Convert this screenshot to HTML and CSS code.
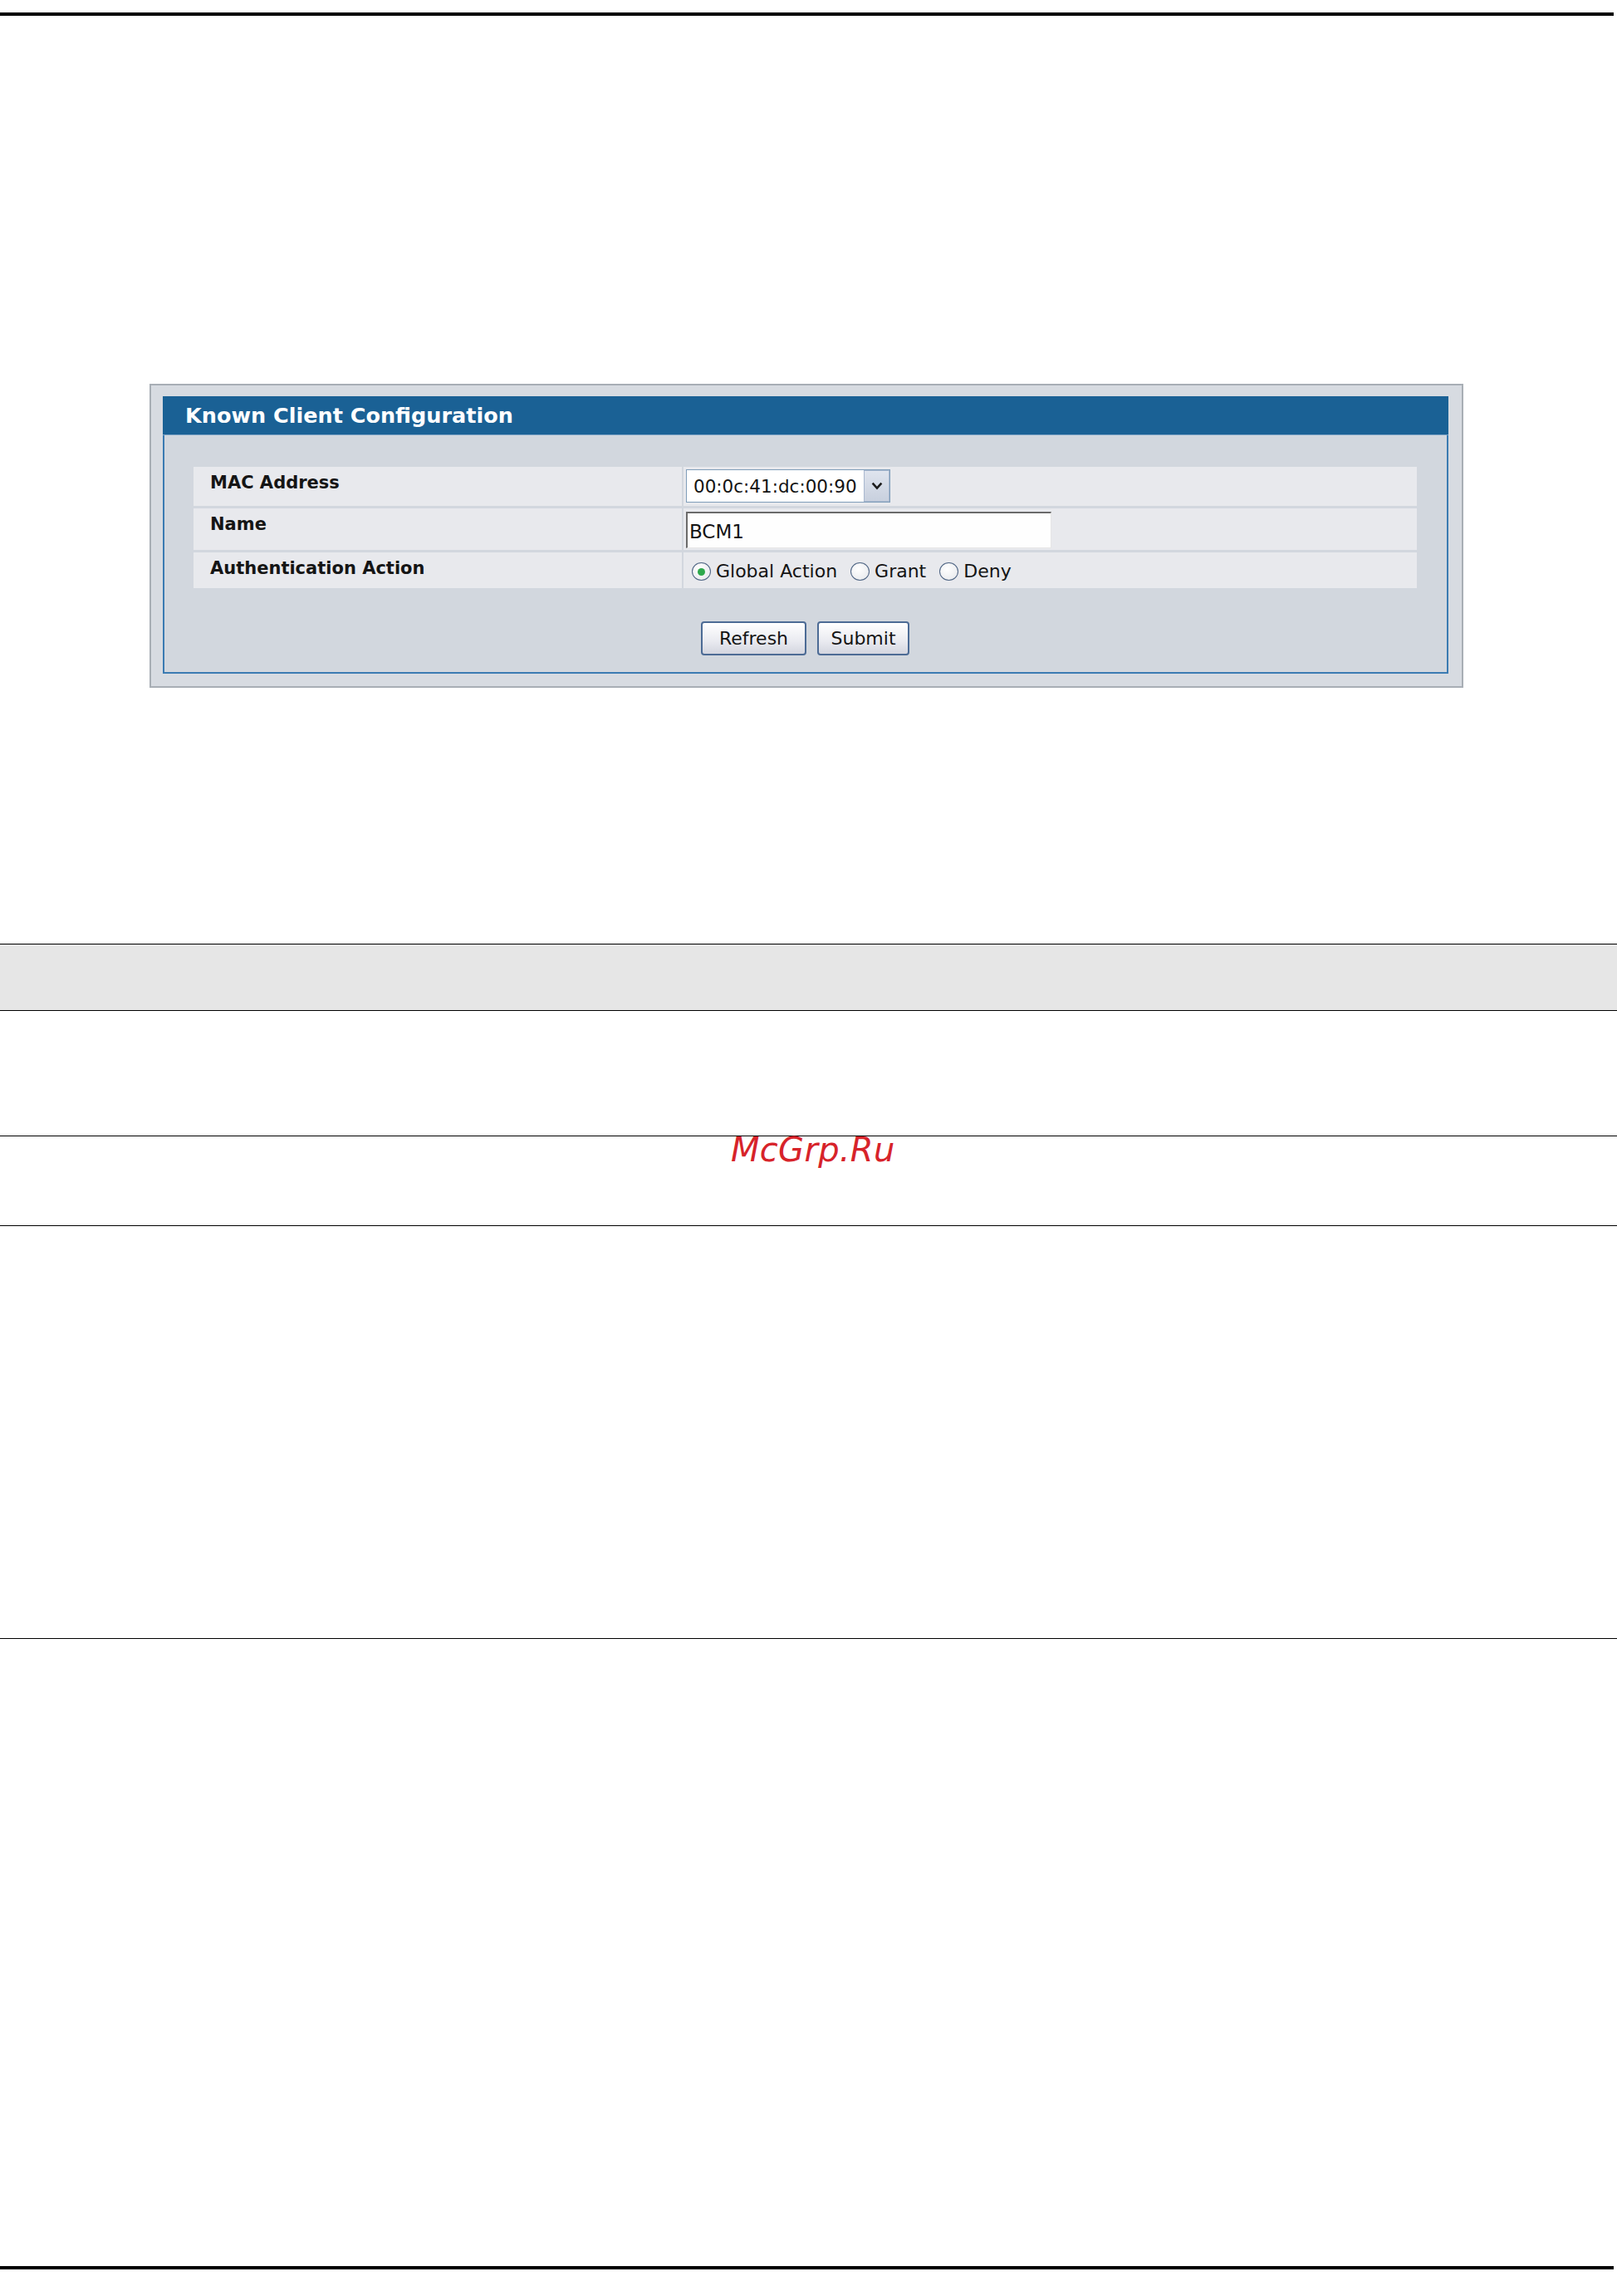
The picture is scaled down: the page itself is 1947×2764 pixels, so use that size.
FILE: index.html
```html
<!DOCTYPE html>
<html lang="en">
<head>
<meta charset="utf-8">
<title>Known Client Configuration</title>
<link rel="stylesheet" href="styles.css">
</head>
<body>
<div class="page">
  <div class="rule rule-top"></div>

  <div class="figure">
    <div class="panel">
      <div class="panel-head">Known Client Configuration</div>
      <div class="panel-body">
        <div class="form-grid">
          <div class="cell label row-1">MAC Address</div>
          <div class="cell value row-1">
            <div class="select">
              <span class="select-text">00:0c:41:dc:00:90</span>
              <span class="select-btn">
                <svg class="chev" viewBox="0 0 16 16" width="16" height="16"><path d="M3.5 5.5 L8 10.5 L12.5 5.5" fill="none" stroke="#1c1c1c" stroke-width="2.6" stroke-linecap="square"/></svg>
              </span>
            </div>
          </div>

          <div class="cell label row-2">Name</div>
          <div class="cell value row-2">
            <div class="text-input">BCM1</div>
          </div>

          <div class="cell label row-3">Authentication Action</div>
          <div class="cell value row-3 radios">
            <span class="radio checked"></span><span class="radio-label">Global Action</span>
            <span class="radio"></span><span class="radio-label">Grant</span>
            <span class="radio"></span><span class="radio-label">Deny</span>
          </div>
        </div>

        <div class="buttons">
          <div class="btn btn-refresh">Refresh</div>
          <div class="btn btn-submit">Submit</div>
        </div>
      </div>
    </div>
  </div>

  <div class="band"></div>
  <div class="sec sec-1"></div>
  <div class="sec sec-2"></div>
  <div class="sec sec-3"></div>

  <div class="rule rule-bottom"></div>

  <div class="watermark">McGrp.Ru</div>
</div>
</body>
</html>
```

FILE: styles.css
```css
html, body {
  margin: 0;
  padding: 0;
  background: #ffffff;
}

.page {
  position: relative;
  width: 1947px;
  padding-top: 15px;
  font-family: "DejaVu Sans", Verdana, sans-serif;
  color: #141414;
}

.rule {
  background: #000;
  height: 4px;
  width: 1943px;
}

.rule-bottom {
  margin-top: 755px;
}

/* ---------- screenshot figure ---------- */
.figure {
  margin: 443px 0 0 180px;
  width: 1582px;
  box-sizing: border-box;
  border: 2px solid #a8aeb5;
  background: #d7dbe1;
  padding: 13px 16px 15px 14px;
}

.panel {
  border: 2px solid #3b7bb2;
  border-top: none;
  background: #d2d7de;
}

.panel-head {
  height: 46px;
  line-height: 46px;
  margin: 0 -2px;
  padding-left: 27px;
  background: #1a6195;
  color: #ffffff;
  font-weight: bold;
  font-size: 25.5px;
  border-bottom: 1px solid #7ea3c4;
}

.panel-body {
  padding: 38px 36px 20px 35px;
}

.form-grid {
  display: grid;
  grid-template-columns: 588px 1fr;
  grid-template-rows: 47px 50px 43px;
  column-gap: 2px;
  row-gap: 3px;
}

.cell {
  background: #e8e9ed;
  box-sizing: border-box;
}

.label {
  font-weight: bold;
  font-size: 21px;
  line-height: 24px;
  padding: 7px 0 0 20px;
  color: #151515;
}

.value {
  font-size: 22px;
  line-height: 24px;
  padding-left: 3px;
}

.row-1.value {
  padding-top: 3px;
}

.row-2.value {
  padding-top: 4px;
}

/* select */
.select {
  width: 246px;
  height: 40px;
  box-sizing: border-box;
  border: 1px solid #7f9db9;
  background: #ffffff;
  display: flex;
  align-items: center;
  justify-content: space-between;
}

.select-text {
  padding-left: 8px;
  padding-top: 2px;
  font-size: 21.5px;
}

.select-btn {
  width: 31px;
  height: 38px;
  box-sizing: border-box;
  border: 1px solid #a9b8cf;
  background: linear-gradient(#dfe4ee, #c8d0de);
  display: flex;
  align-items: center;
  justify-content: center;
}

.chev {
  display: block;
}

/* text input */
.text-input {
  width: 440px;
  height: 44px;
  box-sizing: border-box;
  border-style: solid;
  border-width: 2px 1px 1px 2px;
  border-color: #6a6a6a #e6e6e6 #e6e6e6 #6a6a6a;
  background: #fefefe;
  padding: 10px 0 0 2px;
  font-size: 23px;
}

/* radios */
.radios {
  display: flex;
  align-items: center;
  padding-left: 10px;
  padding-top: 3px;
}

.radio {
  width: 23px;
  height: 22px;
  box-sizing: border-box;
  border: 1.5px solid #4f6584;
  border-radius: 50%;
  background: radial-gradient(circle at 40% 35%, #ffffff, #e4e6ea);
  display: inline-flex;
  align-items: center;
  justify-content: center;
  margin-right: 6px;
}

.radio.checked::after {
  content: "";
  width: 9px;
  height: 9px;
  border-radius: 50%;
  background: #2da84c;
}

.radio-label {
  margin-right: 16px;
}

/* buttons */
.buttons {
  margin-top: 40px;
  display: flex;
  justify-content: center;
  gap: 13px;
}

.btn {
  height: 41px;
  box-sizing: border-box;
  border: 2px solid #4c6b95;
  border-radius: 4px;
  background: linear-gradient(#ffffff, #e9eaf0 60%, #d3d5df);
  font-size: 22px;
  display: flex;
  align-items: center;
  justify-content: center;
  color: #151515;
}

.btn-refresh {
  width: 127px;
}

.btn-submit {
  width: 111px;
}

/* ---------- page table lines ---------- */
.band {
  margin-top: 308px;
  height: 79px;
  background: #e6e6e6;
  border-top: 1px solid #000;
  border-bottom: 1px solid #000;
}

.sec {
  border-bottom: 1px solid #000;
}

.sec-1 {
  height: 150px;
}

.sec-2 {
  height: 107px;
}

.sec-3 {
  height: 496px;
}

/* watermark overlay */
.watermark {
  position: absolute;
  left: 880px;
  top: 1364px;
  font-family: "DejaVu Sans", sans-serif;
  font-style: italic;
  font-size: 40px;
  line-height: 1;
  color: #d7232a;
  letter-spacing: 0.3px;
}
```
